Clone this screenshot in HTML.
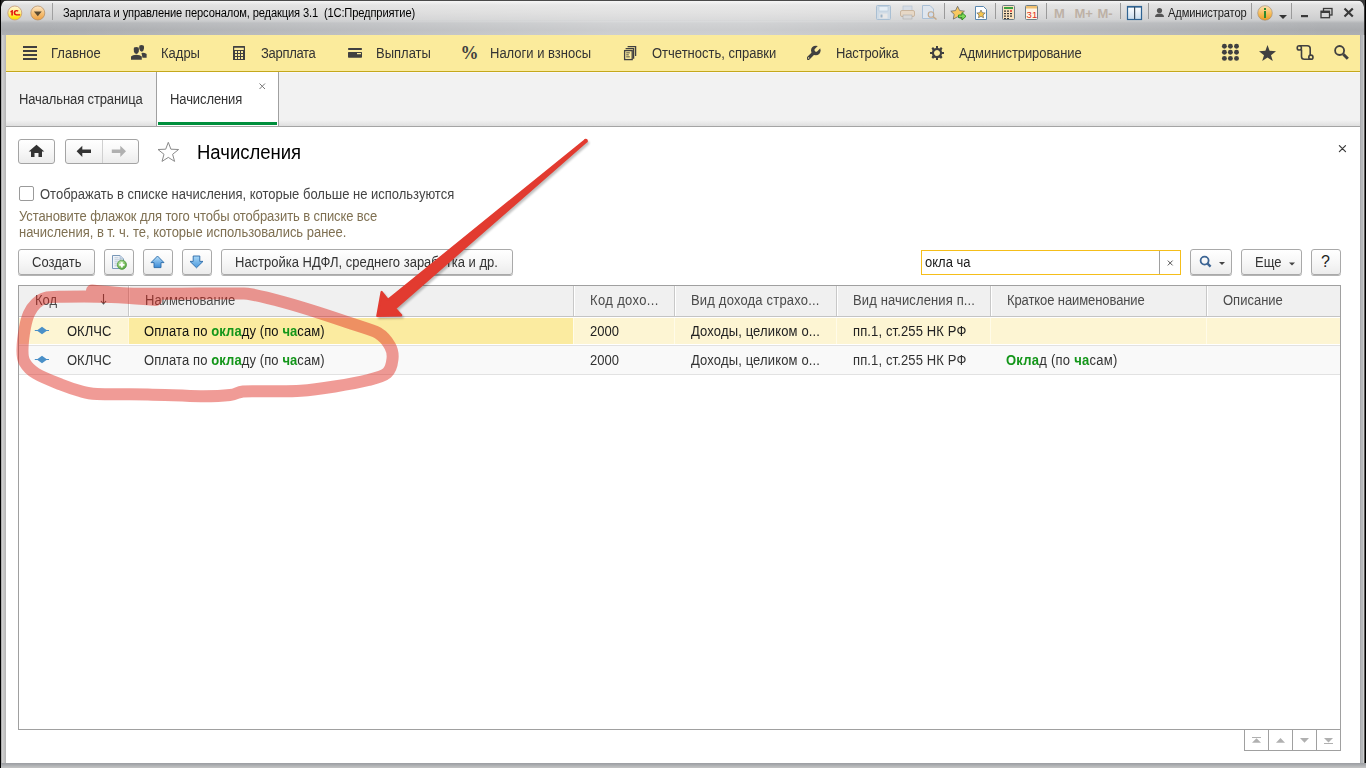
<!DOCTYPE html>
<html><head><meta charset="utf-8">
<style>
*{margin:0;padding:0;box-sizing:border-box}
html,body{width:1366px;height:768px;overflow:hidden;background:#fff;font-family:"Liberation Sans",sans-serif;position:relative}
.a{position:absolute}
.t{position:absolute;white-space:nowrap;line-height:1}
#titlebar{left:0;top:0;width:1366px;height:35px;border-left:1px solid #000;background:linear-gradient(to bottom,#4a4a4a 0,#4a4a4a 1px,#f4f4f4 1px,#e0e0e0 5px,#d9d9d9 12px,#cdcecf 20px,#b3b5b8 23px,#a9abae 30px,#aeb0b3 35px)}
#lframe{left:0;top:35px;width:6px;height:733px;background:linear-gradient(to right,#000 0,#000 1px,#8a8a8a 1px,#d2d2d2 2px,#c4c4c4 4px,#b4b4b4 6px)}
#rframe{left:1360px;top:35px;width:6px;height:733px;background:linear-gradient(to right,#a9abae 0,#a9abae 1px,#b5b7ba 1px,#b5b7ba 3px,#cdcdcd 3px,#cdcdcd 4px,#5a5a5a 4px,#5a5a5a 5px,#000 5px)}
#bframe{left:0;top:763px;width:1366px;height:5px;background:linear-gradient(to bottom,#9c9ea2 0,#a9abae 2px,#b4b6b8 3px,#c4c4c4 5px);border-left:1px solid #000}
#menubar{left:6px;top:35px;width:1354px;height:37px;background:#fbeb9c;border-bottom:1px solid #c4a81c}
.mt{font-size:14px;color:#333;top:46.35px;transform:scaleX(0.9286);transform-origin:0 0}
#tabbar{left:6px;top:72px;width:1354px;height:55px;background:linear-gradient(to bottom,#f2f2f2 0,#f2f2f2 47px,#dcdcdc 54px);border-top:1px solid #f8f8fb;border-bottom:1px solid #a4a4a4}
#content{left:6px;top:127px;width:1354px;height:636px;background:#fff}
.btn{position:absolute;border:1px solid #a9a9a9;border-radius:3px;background:linear-gradient(to bottom,#fff 0,#f7f7f7 50%,#ececec 100%);box-shadow:0 1px 0 #b4b4b4}
.f13{font-size:14px;transform:scaleX(0.9286);transform-origin:0 0;margin-top:-0.85px}
.hd{top:293.5px;color:#4a4a4a}
.r1{top:325px;color:#222}
.r2{top:354px;color:#333}
b.g{color:#14961a;font-weight:bold}
</style></head><body>
<div id="titlebar" class="a"></div>
<div class="a" style="left:1px;top:1px;width:1365px;height:20px;background:linear-gradient(to right,rgba(255,255,255,0) 5%,rgba(255,255,255,0.25) 45%,rgba(255,255,255,0.25) 55%,rgba(255,255,255,0) 95%)"></div>
<div class="a" style="left:1px;top:21px;width:1365px;height:14px;background:linear-gradient(to right,rgba(255,255,255,0) 3%,rgba(255,255,255,0.4) 45%,rgba(255,255,255,0.4) 55%,rgba(255,255,255,0) 97%)"></div>
<div id="lframe" class="a"></div>
<div id="rframe" class="a"></div>
<div id="bframe" class="a"></div>

<!-- title bar content -->
<div class="t" style="left:63px;top:7.15px;font-size:12px;letter-spacing:-0.15px;color:#000;transform:scaleX(0.928);transform-origin:0 0">Зарплата и управление персоналом, редакция 3.1 &nbsp;(1С:Предприятие)</div>

<!-- title icons -->
<svg class="a" style="left:0;top:0" width="1366" height="35" viewBox="0 0 1366 35">
<defs>
<linearGradient id="g1c" x1="0" y1="0" x2="0" y2="1"><stop offset="0" stop-color="#fff6d0"/><stop offset="0.45" stop-color="#ffee90"/><stop offset="0.75" stop-color="#ffe820"/><stop offset="1" stop-color="#f5d800"/></linearGradient>
<linearGradient id="gor" x1="0" y1="0" x2="0" y2="1"><stop offset="0" stop-color="#fde8c8"/><stop offset="0.5" stop-color="#f6c27a"/><stop offset="1" stop-color="#eea040"/></linearGradient>
<linearGradient id="ginfo" x1="0" y1="0" x2="0" y2="1"><stop offset="0" stop-color="#fde2b0"/><stop offset="0.6" stop-color="#f5b850"/><stop offset="1" stop-color="#e99a20"/></linearGradient>
<linearGradient id="gpan" x1="0" y1="0" x2="0" y2="1"><stop offset="0" stop-color="#ffffff"/><stop offset="1" stop-color="#c8dcee"/></linearGradient>
</defs>
<!-- window corners -->
<path d="M0 0 H7 Q2 1 1 7 V0Z" fill="#222"/>
<path d="M1366 0 H1357 Q1363 1 1364 7 V35 H1366Z" fill="#3a3a3a"/><rect x="1365" y="0" width="1" height="35" fill="#000"/>
<!-- 1C logo -->
<circle cx="14.8" cy="13" r="7" fill="url(#g1c)" stroke="#c9a080" stroke-width="0.9"/>
<path d="M10.4 11.2 L12.2 10 H12.9 V15.6 H11.3 V12 L10.4 12.6Z" fill="#e3120b"/>
<path d="M18.6 10.6 Q17.6 9.9 16.5 10 Q13.6 10.3 13.6 12.8 Q13.7 15.2 16.2 15.5 H20.2 V14.2 H16.6 Q15.2 14.1 15.2 12.8 Q15.3 11.4 16.6 11.3 Q17.3 11.3 17.8 11.8Z" fill="#e3120b"/>
<!-- orange dropdown -->
<circle cx="37.8" cy="13" r="7" fill="url(#gor)" stroke="#b08a60" stroke-width="0.7"/>
<path d="M33.9 11.5 H41.7 L37.8 16.3Z" fill="#5a4a30"/>
<rect x="52" y="3" width="1" height="17" fill="#a0a0a0"/>
<!-- disabled save -->
<rect x="876.5" y="5.5" width="14" height="14" rx="1" fill="#cfdbe6" stroke="#a9bfd3"/>
<rect x="879" y="6.5" width="9" height="4.5" fill="#e6eef5" stroke="#b5c8da" stroke-width="0.6"/>
<rect x="879.5" y="13.5" width="8" height="5" fill="#e8e8e8"/>
<rect x="880.5" y="14.5" width="2" height="3" fill="#9eb4c8"/>
<!-- disabled printer -->
<rect x="903" y="6" width="9" height="5" fill="#d6dde6" stroke="#b8c4d0" stroke-width="0.7"/>
<rect x="900.5" y="10.5" width="14" height="6" rx="1.5" fill="#e7d8c6" stroke="#c9b59e"/>
<rect x="903" y="15" width="9" height="4" fill="#d8d8d8" stroke="#aaa" stroke-width="0.6"/>
<!-- disabled preview -->
<path d="M922.5 5.5 H930 L933.5 9 V18.5 H922.5Z" fill="#dfe6ee" stroke="#aac0d6"/>
<circle cx="931" cy="14.5" r="2.8" fill="#d0def0" stroke="#c2a88a" stroke-width="1.1"/>
<path d="M933 16.5 L936.5 19.5" stroke="#c2a88a" stroke-width="1.6"/>
<rect x="944" y="3" width="1" height="16" fill="#9a9a9a"/>
<!-- star + arrow -->
<path d="M957.6 6.3 L959.7 10.6 L964.4 11.2 L961 14.4 L961.9 19.1 L957.6 16.8 L953.3 19.1 L954.2 14.4 L950.8 11.2 L955.5 10.6Z" fill="#f8c860" stroke="#6a6a6a" stroke-width="0.8"/>
<path d="M958.5 15 H962 V12.6 L966 16.3 L962 20 V17.6 H958.5Z" fill="#7ed858" stroke="#2a8a20" stroke-width="0.9"/>
<!-- doc star -->
<path d="M975.5 6.5 H983.5 L986.5 9.5 V19.5 H975.5Z" fill="#fff" stroke="#5a88b0"/>
<path d="M981 10 L982.3 12.7 L985.2 13 L983 15 L983.6 17.8 L981 16.4 L978.4 17.8 L979 15 L976.8 13 L979.7 12.7Z" fill="#f6c650" stroke="#555" stroke-width="0.6"/>
<rect x="995" y="3" width="1" height="16" fill="#9a9a9a"/>
<!-- calculator -->
<rect x="1002.5" y="5.5" width="12" height="14" rx="1" fill="#fbe3bd" stroke="#6e7e86"/>
<rect x="1004" y="7" width="9" height="2" fill="#3aa040"/>
<g fill="#333"><rect x="1004" y="10.5" width="2" height="1.2"/><rect x="1007" y="10.5" width="2" height="1.2"/><rect x="1004" y="13" width="2" height="1.2"/><rect x="1007" y="13" width="2" height="1.2"/><rect x="1010" y="13" width="2" height="1.2"/><rect x="1004" y="15.5" width="2" height="1.2"/><rect x="1007" y="15.5" width="2" height="1.2"/><rect x="1010" y="15.5" width="2" height="1.2"/><rect x="1004" y="18" width="2" height="1"/><rect x="1007" y="18" width="2" height="1"/></g>
<rect x="1010.3" y="10" width="1.4" height="2" fill="#e02020"/>
<!-- calendar -->
<rect x="1025.5" y="5.5" width="12" height="14" rx="1" fill="#fff4e4" stroke="#6e7e86"/>
<rect x="1026" y="6" width="11" height="2.5" fill="#f0c070"/>
<text x="1026.6" y="18" font-family="Liberation Sans" font-size="9.5" fill="#e03020">31</text>
<rect x="1046" y="3" width="1" height="16" fill="#9a9a9a"/>
<g font-family="Liberation Sans" font-weight="bold" font-size="13" fill="#bdb1a6">
<text x="1054" y="18">M</text><text x="1074.5" y="18">M+</text><text x="1097.5" y="18">M-</text></g>
<rect x="1120" y="3" width="1" height="16" fill="#9a9a9a"/>
<!-- panel -->
<rect x="1127.5" y="6.5" width="14" height="13" fill="url(#gpan)" stroke="#2f6392" stroke-width="1.2"/>
<rect x="1127" y="6" width="15" height="1.6" fill="#2f6392"/>
<rect x="1134" y="7" width="1.2" height="12" fill="#3a4a5a"/>
<rect x="1148" y="3" width="1" height="16" fill="#9a9a9a"/>
<!-- person -->
<circle cx="1159.5" cy="10.5" r="2.6" fill="#555"/>
<path d="M1155 17 Q1155 13.5 1159.5 13.5 Q1164 13.5 1164 17Z" fill="#555"/>
<rect x="1251" y="3" width="1" height="16" fill="#9a9a9a"/>
<!-- info -->
<circle cx="1265" cy="13" r="7.3" fill="url(#ginfo)" stroke="#9a8a7a" stroke-width="0.6"/>
<rect x="1264" y="8" width="2" height="2" fill="#2e8a2e"/>
<rect x="1264" y="11" width="2" height="7" fill="#2e8a2e"/>
<path d="M1279 15 H1287 L1283 19Z" fill="#333"/>
<rect x="1291" y="3" width="1" height="16" fill="#9a9a9a"/>
<!-- window buttons -->
<rect x="1301" y="15" width="7" height="2.2" fill="#3a3a3a"/>
<rect x="1323.5" y="8.5" width="8.5" height="6.5" fill="none" stroke="#3a3a3a" stroke-width="1.3"/>
<rect x="1321" y="11.2" width="8.5" height="6.5" fill="#d6d6d6" stroke="#3a3a3a" stroke-width="1.3"/>
<rect x="1321" y="11" width="8.5" height="2" fill="#3a3a3a"/>
<path d="M1344.5 8.5 L1352.8 16.5 M1352.8 8.5 L1344.5 16.5" stroke="#3a3a3a" stroke-width="2.2"/>
</svg>
<div class="t" style="left:1168px;top:7.15px;font-size:12px;letter-spacing:-0.15px;color:#222;transform:scaleX(0.928);transform-origin:0 0">Администратор</div>

<!-- menu bar -->
<div id="menubar" class="a"></div>
<div class="t mt" style="left:51.3px">Главное</div>
<div class="t mt" style="left:160.5px">Кадры</div>
<div class="t mt" style="left:261px;letter-spacing:-0.32px">Зарплата</div>
<div class="t mt" style="left:376.3px">Выплаты</div>
<div class="t mt" style="left:490px">Налоги и взносы</div>
<div class="t mt" style="left:652px">Отчетность, справки</div>
<div class="t mt" style="left:835.5px;letter-spacing:-0.16px">Настройка</div>
<div class="t mt" style="left:958.5px;letter-spacing:-0.08px">Администрирование</div>

<!-- menu icons -->
<svg class="a" style="left:0;top:35px" width="1366" height="37" viewBox="0 35 1366 37">
<g fill="#404040">
<!-- hamburger -->
<rect x="23" y="46" width="14" height="2"/><rect x="23" y="50" width="14" height="2"/><rect x="23" y="54" width="14" height="2"/><rect x="23" y="58" width="14" height="2"/>
<!-- kadry -->
<path d="M139.5 45.5 Q141.5 44.6 143.5 45.5 Q144.3 46.5 144 48.5 Q143.8 51 141.7 51.8 Q139.7 51.2 139.3 48.8 Q139 47 139.5 45.5Z"/>
<path d="M141.5 53 Q144 52.4 146.6 54 V57.7 H142.5Z"/>
<path d="M134 47.5 Q136.3 46.4 138.6 47.5 Q139.2 49 138.8 51.5 Q138.4 53.6 136.3 54 Q134.3 53.6 133.9 51.5 Q133.5 49 134 47.5Z"/>
<path d="M131 56.5 Q132.5 54.8 136.3 54.8 Q140.2 54.8 141.8 56.5 V59.7 H131Z"/>
<!-- calculator -->
<path d="M233 46.5 Q233 46 233.5 46 H244.5 Q245 46 245 46.5 V59.5 Q245 60 244.5 60 H233.5 Q233 60 233 59.5Z M234.2 47.8 V50 H243.8 V47.8Z M235 51 V53 H237 V51Z M238 51 V53 H240 V51Z M241 51 V53 H243 V51Z M235 54 V56 H237 V54Z M238 54 V56 H240 V54Z M241 54 V56 H243 V54Z M235 57 V59 H237 V57Z M238 57 V59 H240 V57Z M241 57 V59 H243 V57Z" fill-rule="evenodd"/>
<!-- wallet -->
<rect x="348" y="48" width="14" height="2" rx="0.8"/>
<path d="M348 52.5 Q348 52 348.7 52 H361.3 Q362 52 362 52.5 V57 Q362 57.8 361.3 57.8 H348.7 Q348 57.8 348 57 Z M357 53 V54.2 H361 V53Z" fill-rule="evenodd"/>
<!-- docs -->
<rect x="624.6" y="50.6" width="7.6" height="9" fill="none" stroke="#404040" stroke-width="1.3"/>
<path d="M625.6 48.6 H633.6 V58.8" fill="none" stroke="#404040" stroke-width="1.3"/>
<path d="M627.6 46.6 H635.6 V56" fill="none" stroke="#404040" stroke-width="1.3"/>
<rect x="626.2" y="52.4" width="3.6" height="0.9"/><rect x="626.2" y="54.4" width="2.6" height="0.9"/><rect x="626.2" y="56.4" width="3.6" height="0.9"/>
<!-- wrench -->
<mask id="wm"><rect x="800" y="40" width="30" height="25" fill="#fff"/><path d="M816.2 50 L822 44.2" stroke="#000" stroke-width="3.3" stroke-linecap="round"/><circle cx="808.6" cy="58" r="0.8" fill="#000"/></mask>
<g mask="url(#wm)"><path d="M808.3 58.3 L814.2 52.4" stroke="#404040" stroke-width="3.4" stroke-linecap="round"/><circle cx="815.8" cy="50.5" r="4.8"/></g>
<!-- gear -->
<path fill-rule="evenodd" d="M936 46 H938 V48 L939.5 48.5 L941 47 L942.5 48.5 L941.5 50 L942 51.9 H944 V54.1 H942 L941.5 55.6 L942.5 57.3 L941 58.8 L939.5 57.7 L938 58 V60 H936 V58 L934.5 57.7 L933 58.8 L931.5 57.3 L932.5 55.6 L932 54.1 H930 V51.9 H932 L932.5 50 L931.5 48.5 L933 47 L934.5 48.5 L936 48Z M937 50 a3 3 0 1 0 0.01 0Z"/>
<!-- grid -->
<circle cx="1224.4" cy="46.3" r="2.45"/><circle cx="1230.4" cy="46.3" r="2.45"/><circle cx="1236.5" cy="46.3" r="2.45"/>
<circle cx="1224.4" cy="52.3" r="2.45"/><circle cx="1230.4" cy="52.3" r="2.45"/><circle cx="1236.5" cy="52.3" r="2.45"/>
<circle cx="1224.4" cy="58.4" r="2.45"/><circle cx="1230.4" cy="58.4" r="2.45"/><circle cx="1236.5" cy="58.4" r="2.45"/>
<!-- star -->
<path d="M1267.5 44.9 L1269.6 50.7 L1276 51.3 L1271 55.3 L1272.8 61 L1267.5 57.6 L1262.2 61 L1264 55.3 L1259 51.3 L1265.4 50.7Z"/>
</g>
<!-- scroll -->
<g fill="none" stroke="#404040" stroke-width="1.6">
<path d="M1299.3 45.8 H1307.3 Q1310.2 45.8 1310.2 48.7 V55.2"/>
<path d="M1301.5 49.6 V56.5 Q1301.5 59.3 1304.3 59.3 H1310.9"/>
<circle cx="1299.3" cy="47.9" r="2.1"/>
<circle cx="1310.9" cy="57.2" r="2.1"/>
</g>
<!-- search -->
<circle cx="1339.6" cy="50.5" r="4.5" fill="none" stroke="#404040" stroke-width="1.8"/>
<path d="M1343.3 54.2 L1347.8 58.7" stroke="#404040" stroke-width="3"/>
</svg>
<div class="t" style="left:460.5px;top:44px;font-family:'Liberation Serif';font-weight:bold;font-size:18px;color:#404040">%</div>

<!-- tabs -->
<div id="tabbar" class="a"></div>
<div class="t f13" style="left:19px;top:92.7px;color:#333;letter-spacing:-0.13px">Начальная страница</div>
<div class="a" style="left:156px;top:72px;width:123px;height:54px;background:#fff;border-left:1px solid #a0a0a0;border-right:1px solid #a0a0a0"></div>
<div class="a" style="left:158px;top:122px;width:119px;height:3px;background:#008f3d"></div>
<div class="t f13" style="left:170px;top:92.7px;color:#333;letter-spacing:-0.1px">Начисления</div>

<div id="content" class="a"></div>

<!-- nav buttons -->
<div class="btn" style="left:18px;top:139px;width:37px;height:25px;box-shadow:none;border-color:#a4a4a4"></div>
<div class="btn" style="left:65px;top:139px;width:74px;height:25px;box-shadow:none;border-color:#a4a4a4"></div>
<div class="a" style="left:102px;top:140px;width:1px;height:23px;background:#d0d0d0"></div>

<div class="t" style="left:196.5px;top:143.35px;font-size:19.5px;color:#000;transform:scaleX(0.9487);transform-origin:0 0">Начисления</div>


<!-- checkbox -->
<div class="a" style="left:19px;top:186px;width:15px;height:15px;border:1px solid #9a9a9a;border-radius:2px;background:#fff"></div>
<div class="t f13" style="left:39.5px;top:187.5px;color:#444">Отображать в списке начисления, которые больше не используются</div>
<div class="t f13" style="left:18.5px;top:209.7px;color:#7f7052;letter-spacing:-0.1px">Установите флажок для того чтобы отобразить в списке все</div>
<div class="t f13" style="left:18.5px;top:225.7px;color:#7f7052;letter-spacing:-0.025px">начисления, в т. ч. те, которые использовались ранее.</div>

<!-- toolbar -->
<div class="btn" style="left:18px;top:249px;width:77px;height:26px"></div>
<div class="t f13" style="left:32px;top:256.2px;color:#333">Создать</div>
<div class="btn" style="left:104px;top:249px;width:30px;height:26px"></div>
<div class="btn" style="left:143px;top:249px;width:30px;height:26px"></div>
<div class="btn" style="left:182px;top:249px;width:30px;height:26px"></div>
<div class="btn" style="left:221px;top:249px;width:292px;height:26px"></div>
<div class="t f13" style="left:235px;top:256.2px;color:#333">Настройка НДФЛ, среднего заработка и др.</div>

<div class="a" style="left:921px;top:250px;width:260px;height:25px;border:1px solid #f5be1a;background:#fff"></div>
<div class="a" style="left:1159px;top:251px;width:1px;height:23px;background:#a0a0a0"></div>
<div class="t f13" style="left:925px;top:256.2px;color:#1a1a1a">окла ча</div>
<div class="btn" style="left:1190px;top:249px;width:42px;height:26px"></div>
<div class="btn" style="left:1241px;top:249px;width:61px;height:26px"></div>
<div class="t f13" style="left:1255px;top:256.2px;color:#333">Еще</div>
<div class="btn" style="left:1311px;top:249px;width:30px;height:26px"></div>

<!-- table -->
<div class="a" style="left:18px;top:285px;width:1323px;height:445px;border:1px solid #a0a0a0;background:#fff"></div>
<div class="a" style="left:19px;top:286px;width:1321px;height:31px;background:#f0f0f0;border-bottom:1px solid #c4c4c4"></div>
<div class="a" style="left:128px;top:286px;width:1px;height:30px;background:#c8c8c8;border-right:1px solid #fff;box-sizing:content-box"></div>
<div class="a" style="left:573px;top:286px;width:1px;height:30px;background:#c8c8c8;border-right:1px solid #fff;box-sizing:content-box"></div>
<div class="a" style="left:674px;top:286px;width:1px;height:30px;background:#c8c8c8;border-right:1px solid #fff;box-sizing:content-box"></div>
<div class="a" style="left:836px;top:286px;width:1px;height:30px;background:#c8c8c8;border-right:1px solid #fff;box-sizing:content-box"></div>
<div class="a" style="left:990px;top:286px;width:1px;height:30px;background:#c8c8c8;border-right:1px solid #fff;box-sizing:content-box"></div>
<div class="a" style="left:1206px;top:286px;width:1px;height:30px;background:#c8c8c8;border-right:1px solid #fff;box-sizing:content-box"></div>
<div class="t f13 hd" style="left:35px">Код</div>
<svg class="a" style="left:98px;top:290px" width="12" height="18" viewBox="98 290 12 18"><path d="M103.5 294 V303" stroke="#4a4a4a" stroke-width="1.1"/><path d="M101 301 L103.5 304 L106 301" fill="none" stroke="#4a4a4a" stroke-width="1.1"/></svg>
<div class="t f13 hd" style="left:145px">Наименование</div>
<div class="t f13 hd" style="left:590px;letter-spacing:0.38px">Код дохо...</div>
<div class="t f13 hd" style="left:691px;letter-spacing:0.2px">Вид дохода страхо...</div>
<div class="t f13 hd" style="left:853px;letter-spacing:0.14px">Вид начисления п...</div>
<div class="t f13 hd" style="left:1007px;letter-spacing:-0.1px">Краткое наименование</div>
<div class="t f13 hd" style="left:1223px">Описание</div>
<!-- row 1 -->
<div class="a" style="left:19px;top:318px;width:1321px;height:26px;background:#fdf5d3"></div>
<div class="a" style="left:129px;top:318px;width:444px;height:26px;background:#fbeba0"></div>
<div class="a" style="left:128px;top:318px;width:1px;height:26px;background:#fff8e0"></div>
<div class="a" style="left:573px;top:318px;width:1px;height:26px;background:#fffbe8"></div>
<div class="a" style="left:674px;top:318px;width:1px;height:26px;background:#fffbe8"></div>
<div class="a" style="left:836px;top:318px;width:1px;height:26px;background:#fffbe8"></div>
<div class="a" style="left:990px;top:318px;width:1px;height:26px;background:#fffbe8"></div>
<div class="a" style="left:1206px;top:318px;width:1px;height:26px;background:#fffbe8"></div>
<div class="a" style="left:19px;top:345px;width:1321px;height:1px;background:#e2e2e2"></div>
<!-- row 2 -->
<div class="a" style="left:19px;top:346px;width:1321px;height:28px;background:#f9f9f9"></div>
<div class="a" style="left:19px;top:374px;width:1321px;height:1px;background:#e2e2e2"></div>
<div class="t f13 r1" style="left:67px">ОКЛЧС</div>
<div class="t f13 r1" style="left:144px;color:#111;letter-spacing:0.11px">Оплата по <b class="g">окла</b>ду (по <b class="g">ча</b>сам)</div>
<div class="t f13 r1" style="left:590px">2000</div>
<div class="t f13 r1" style="left:691px;letter-spacing:0.16px">Доходы, целиком о...</div>
<div class="t f13 r1" style="left:853px;letter-spacing:0.14px">пп.1, ст.255 НК РФ</div>
<div class="t f13 r2" style="left:67px">ОКЛЧС</div>
<div class="t f13 r2" style="left:144px;letter-spacing:0.11px">Оплата по <b class="g">окла</b>ду (по <b class="g">ча</b>сам)</div>
<div class="t f13 r2" style="left:590px">2000</div>
<div class="t f13 r2" style="left:691px;letter-spacing:0.16px">Доходы, целиком о...</div>
<div class="t f13 r2" style="left:853px;letter-spacing:0.14px">пп.1, ст.255 НК РФ</div>
<div class="t f13 r2" style="left:1006px;letter-spacing:0.27px"><b class="g">Окла</b>д (по <b class="g">ча</b>сам)</div>
<svg class="a" style="left:30px;top:325px" width="24" height="40" viewBox="30 325 24 40">
<path d="M34.8 330 H37.5 L42 326.8 L46.5 330 H49 V331 H46.5 L42 334.2 L37.5 331 H34.8Z" fill="#4a90c8"/>
<path d="M34.8 359 H37.5 L42 355.8 L46.5 359 H49 V360 H46.5 L42 363.2 L37.5 360 H34.8Z" fill="#4a90c8"/>
</svg>
<!-- bottom nav -->
<div class="a" style="left:1244px;top:729px;width:97px;height:22px;border:1px solid #a0a0a0;background:#fff"></div>
<div class="a" style="left:1268px;top:729px;width:1px;height:22px;background:#a0a0a0"></div>
<div class="a" style="left:1292px;top:729px;width:1px;height:22px;background:#a0a0a0"></div>
<div class="a" style="left:1316px;top:729px;width:1px;height:22px;background:#a0a0a0"></div>
<svg class="a" style="left:1244px;top:730px" width="97" height="20" viewBox="1244 730 97 20">
<g fill="#b0b0b0">
<rect x="1252" y="737" width="9" height="1"/><path d="M1256.5 738.3 L1261 742.8 H1252Z"/>
<path d="M1280.5 738 L1285 742.8 H1276Z"/>
<path d="M1300 738 H1309 L1304.5 742.8Z"/>
<path d="M1324 738 H1333 L1328.5 742.5Z"/><rect x="1324" y="743" width="9" height="1"/>
</g></svg>

<svg class="a" style="left:0;top:127px" width="1366" height="160" viewBox="0 127 1366 160">
<!-- home -->
<path d="M36.5 144.7 L44.3 151.5 H42 V157 H38.5 V153 H34.5 V157 H31 V151.5 H28.7Z" fill="#333"/>
<!-- back -->
<path d="M76.6 151.3 L82.3 145.7 V149.6 H91 V153 H82.3 V157 Z" fill="#333"/>
<!-- forward -->
<path d="M126 151.3 L120.3 145.7 V149.6 H111.8 V153 H120.3 V157 Z" fill="#b0b0b0"/>
<!-- star outline -->
<path d="M168.3 142.3 L170.9 149.2 L178.6 149.5 L172.6 154.3 L174.6 161.4 L168.3 157.4 L162 161.4 L164 154.3 L158 149.5 L165.7 149.2Z" fill="none" stroke="#8a8a8a" stroke-width="1"/>
<!-- close x -->
<path d="M1339.4 145.6 L1345.5 151.6 M1345.5 145.6 L1339.4 151.6" stroke="#3a3a3a" stroke-width="1.25" stroke-linecap="round"/>
<!-- add doc icon -->
<defs>
<linearGradient id="gup" x1="0" y1="0" x2="0" y2="1"><stop offset="0" stop-color="#b8e0fa"/><stop offset="1" stop-color="#3a8ad6"/></linearGradient>
<linearGradient id="gdn" x1="0" y1="0" x2="0" y2="1"><stop offset="0" stop-color="#a8d8f8"/><stop offset="1" stop-color="#4a98dc"/></linearGradient>
<radialGradient id="ggr" cx="0.4" cy="0.35" r="0.7"><stop offset="0" stop-color="#d8f0c8"/><stop offset="0.6" stop-color="#7cc060"/><stop offset="1" stop-color="#4a9a3a"/></radialGradient>
</defs>
<path d="M112.5 255.5 H120 L123.5 259 V268.5 H112.5Z" fill="#eef3f9" stroke="#7a98b8"/>
<path d="M120 255.5 V259 H123.5" fill="#c8d8e8" stroke="#9ab0c8" stroke-width="0.6"/>
<path d="M114.5 257.8 H118.5 M114.5 259.8 H121 M114.5 261.8 H121 M114.5 263.8 H119 M114.5 265.8 H119" stroke="#a8b8c8" stroke-width="0.7"/>
<circle cx="121.9" cy="264.8" r="4.6" fill="url(#ggr)" stroke="#4a9a3a" stroke-width="0.7"/>
<path d="M121.9 262.2 V267.4 M119.3 264.8 H124.5" stroke="#fff" stroke-width="1.7"/>
<!-- up arrow -->
<path d="M157.5 256 L164 262.6 H161 V267.6 H154 V262.6 H151Z" fill="url(#gup)" stroke="#2a6aa8" stroke-width="0.9" stroke-linejoin="round"/>
<!-- down arrow -->
<path d="M196.5 267.8 L203 261.4 H199.8 V256 H193.2 V261.4 H190Z" fill="url(#gdn)" stroke="#2a6aa8" stroke-width="0.9" stroke-linejoin="round"/>
<!-- search x -->
<path d="M1167.8 260.6 L1172.6 265.4 M1172.6 260.6 L1167.8 265.4" stroke="#555" stroke-width="1"/>
<!-- magnifier -->
<circle cx="1204.6" cy="260.6" r="4" fill="none" stroke="#3d6594" stroke-width="1.8"/>
<path d="M1207.6 263.6 L1210.6 266.6" stroke="#3d6594" stroke-width="2.4"/>
<path d="M1219 262 H1225 L1222 265Z" fill="#444"/>
<path d="M1289 262.5 H1295 L1292 265.5Z" fill="#444"/>
</svg>
<div class="t" style="left:1321px;top:254px;font-size:16px;color:#222">?</div>
<svg class="a" style="left:255px;top:80px" width="14" height="14" viewBox="255 80 14 14"><path d="M259.5 83.5 L265 89 M265 83.5 L259.5 89" stroke="#777" stroke-width="1"/></svg>
<svg class="a" style="left:0;top:0" width="1366" height="768" viewBox="0 0 1366 768">
<path d="M92.0 290.5 C97.8 291.0 116.3 292.9 127.0 293.5 C137.7 294.1 144.0 293.8 156.0 293.8 C168.0 293.8 185.3 293.6 199.0 293.5 C212.7 293.4 229.2 293.3 238.0 293.5 C246.8 293.7 244.3 293.0 252.0 294.5 C259.7 296.0 273.0 299.3 284.0 302.3 C295.0 305.3 306.7 308.9 318.0 312.5 C329.3 316.1 342.0 320.4 352.0 323.8 C362.0 327.2 371.7 329.3 378.0 333.0 C384.3 336.7 387.6 341.7 390.0 346.0 C392.4 350.3 393.0 354.5 392.5 359.0 C392.0 363.5 391.0 369.5 387.0 373.0 C383.0 376.5 377.2 377.8 368.5 380.0 C359.8 382.2 346.0 384.7 334.7 386.5 C323.4 388.3 312.1 390.0 300.8 390.8 C289.5 391.6 276.5 391.2 266.9 391.3 C257.3 391.4 249.2 390.9 243.0 391.5 C236.8 392.1 237.1 394.2 230.0 395.0 C222.9 395.8 214.3 396.3 200.6 396.2 C186.9 396.1 165.3 394.8 148.0 394.4 C130.7 394.0 108.3 394.6 97.0 394.0 C85.7 393.4 86.0 392.6 80.0 391.0 C74.0 389.4 68.1 387.4 60.8 384.5 C53.5 381.6 42.0 377.2 36.0 373.5 C29.9 369.8 26.8 366.1 24.5 362.0 C22.2 357.9 22.4 354.7 22.5 349.0 C22.6 343.3 23.8 333.9 24.9 328.0 C26.0 322.1 27.1 317.6 29.0 313.5 C30.9 309.4 33.3 306.1 36.0 303.5 C38.7 300.9 40.7 299.1 45.0 298.0 C49.3 296.9 50.9 297.0 62.0 296.8 C73.1 296.6 95.9 296.5 111.6 297.0 C127.3 297.5 148.6 299.5 156.0 300.0" fill="none" stroke="#de2116" stroke-opacity="0.45" stroke-width="12" stroke-linecap="round" stroke-linejoin="round"/>
</svg>
<svg class="a" style="left:0;top:0" width="1366" height="768" viewBox="0 0 1366 768">
<defs><filter id="bl" x="-10%" y="-10%" width="120%" height="120%"><feGaussianBlur stdDeviation="0.8"/></filter></defs>

<g transform="translate(1.6,2)" filter="url(#bl)" opacity="0.25"><path d="M585.3 140.0 L388.0 299.9 L381.6 292.0 L377.3 316.0 L401.2 315.3 L395.2 308.5 L586.5 141.4 Z" fill="#000" stroke="#000" stroke-width="2.2" stroke-linejoin="round"/><circle cx="585.9" cy="140.7" r="1.8"/></g>
<path d="M585.3 140.0 L388.0 299.9 L381.6 292.0 L377.3 316.0 L401.2 315.3 L395.2 308.5 L586.5 141.4 Z" fill="#e23b30" stroke="#e23b30" stroke-width="2.2" stroke-linejoin="round"/>
<circle cx="585.9" cy="140.7" r="1.9" fill="#e23b30"/>
</svg>
</body></html>
